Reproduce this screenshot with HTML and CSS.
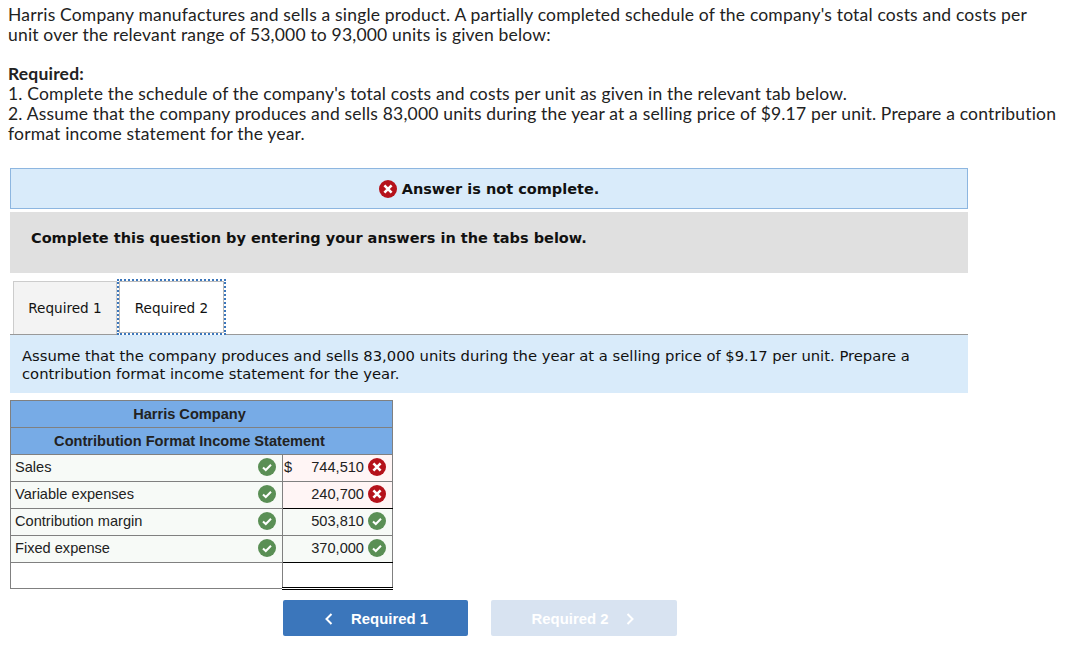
FILE: index.html
```html
<!DOCTYPE html>
<html lang="en">
<head>
    <meta charset="UTF-8">
    <title>Harris Company</title>
    <link rel="stylesheet" href="styles.css">
</head>
<body>

    <svg class="defs" width="0" height="0">
        <symbol id="icon-x" viewBox="0 0 18 18">
            <circle cx="9" cy="9" r="9" fill="#b5121b"/>
            <path d="M5.4 5.4l7.2 7.2M12.6 5.4l-7.2 7.2" stroke="#fff" stroke-width="2.6" fill="none"/>
        </symbol>
        <symbol id="icon-check" viewBox="0 0 18 18">
            <circle cx="9" cy="9" r="9" fill="#5a8f55"/>
            <path d="M5 9.4l2.8 2.6 5.2-5.2" stroke="#fff" stroke-width="2" fill="none"/>
        </symbol>
    </svg>

    <div class="pregunta">
        <p>Harris Company manufactures and sells a single product. A partially completed schedule of the company's total costs and costs per unit over the relevant range of 53,000 to 93,000 units is given below:</p>
        <p class="requerido"><strong>Required:</strong><br>
        1. Complete the schedule of the company's total costs and costs per unit as given in the relevant tab below.<br>
        2. Assume that the company produces and sells 83,000 units during the year at a selling price of $9.17 per unit. Prepare a contribution format income statement for the year.</p>
    </div>

    <div class="contenido">
        <div class="aviso">
            <svg class="icono-aviso"><use href="#icon-x"/></svg>
            <strong>Answer is not complete.</strong>
        </div>
        <div class="instruccion">Complete this question by entering your answers in the tabs below.</div>

        <div class="tabs">
            <div class="tab">Required 1</div>
            <div class="tab activo">Required 2</div>
        </div>
        <div class="enunciado">Assume that the company produces and sells 83,000 units during the year at a selling price of $9.17 per unit. Prepare a contribution format income statement for the year.</div>

        <table class="estado">
            <colgroup>
                <col class="col-concepto">
                <col>
            </colgroup>
            <tr><th colspan="2">Harris Company</th></tr>
            <tr><th colspan="2">Contribution Format Income Statement</th></tr>
            <tr>
                <td><div class="celda">Sales <svg class="icono"><use href="#icon-check"/></svg></div></td>
                <td class="mal"><div class="celda valor"><span>$</span><span class="monto">744,510</span> <svg class="icono"><use href="#icon-x"/></svg></div></td>
            </tr>
            <tr>
                <td><div class="celda">Variable expenses <svg class="icono"><use href="#icon-check"/></svg></div></td>
                <td class="mal linea"><div class="celda valor"><span class="monto">240,700</span> <svg class="icono"><use href="#icon-x"/></svg></div></td>
            </tr>
            <tr>
                <td><div class="celda">Contribution margin <svg class="icono"><use href="#icon-check"/></svg></div></td>
                <td><div class="celda valor"><span class="monto">503,810</span> <svg class="icono"><use href="#icon-check"/></svg></div></td>
            </tr>
            <tr>
                <td><div class="celda">Fixed expense <svg class="icono"><use href="#icon-check"/></svg></div></td>
                <td class="linea"><div class="celda valor"><span class="monto">370,000</span> <svg class="icono"><use href="#icon-check"/></svg></div></td>
            </tr>
            <tr class="vacia">
                <td></td>
                <td class="doble"></td>
            </tr>
        </table>

        <div class="navegacion">
            <div class="boton">
                <svg class="flecha" viewBox="0 0 8 12"><path d="M6.5 1L1.5 6l5 5"/></svg>
                Required 1
            </div>
            <div class="boton inactivo">
                Required 2
                <svg class="flecha" viewBox="0 0 8 12"><path d="M1.5 1l5 5-5 5"/></svg>
            </div>
        </div>
    </div>

</body>
</html>
```

FILE: styles.css
```css
body {
    margin: 0;
    padding: 5px 8px 0;
    background-color: #fff;
    color: #222;
    font-family: Lato, "Open Sans", sans-serif;
    font-size: 17.5px;
    letter-spacing: 0.18px;
    line-height: 20px;
}

.defs {
    position: absolute;
}

.pregunta {
    width: 1051px;
}

.pregunta p {
    margin: 0;
}

.pregunta .requerido {
    margin-top: 19px;
}

.contenido {
    width: 958px;
    margin: 24px 0 0 2px;
    font-family: "DejaVu Sans", sans-serif;
    letter-spacing: 0;
    color: #111;
}

.aviso {
    height: 39px;
    display: flex;
    justify-content: center;
    align-items: center;
    gap: 5px;
    background-color: #d9ebfa;
    border: 1px solid #8db6e0;
    font-size: 14.5px;
}

.icono-aviso {
    width: 18px;
    height: 18px;
}

.instruccion {
    height: 61px;
    margin-top: 3px;
    padding: 16px 21px 0;
    box-sizing: border-box;
    background-color: #e0e0e0;
    font-size: 14.5px;
    font-weight: bold;
}

.tabs {
    display: flex;
    margin-top: 6px;
    padding-left: 3px;
    height: 55px;
    border-bottom: 1px solid #999;
}

.tab {
    width: 104px;
    margin-top: 2px;
    box-sizing: border-box;
    border: 1px solid #ccc;
    border-bottom: none;
    background-color: #f3f3f3;
    font-size: 13.6px;
    text-align: center;
    line-height: 52px;
}

.tab.activo {
    width: 109px;
    margin-top: 0;
    height: 56px;
    background-color: #fff;
    border: 2px dotted #3b76bb;
    outline: 1px solid #bbb;
    outline-offset: -3px;
    line-height: 55px;
}

.enunciado {
    padding: 12px 12px 10px;
    background-color: #d9ebfa;
    font-size: 14.75px;
    line-height: 18px;
}

.estado {
    width: 383px;
    margin-top: 7px;
    border-collapse: collapse;
    table-layout: fixed;
    font-family: "Liberation Sans", Arial, sans-serif;
    font-size: 14.6px;
    color: #222;
}

.col-concepto {
    width: 272px;
}

.estado th {
    height: 26px;
    padding: 0 24px 0 0;
    background-color: #77abe6;
    border: 1px solid #808080;
}

.estado td {
    height: 26px;
    padding: 0;
    background-color: #f7faf7;
    border: 1px solid #808080;
}

.celda {
    display: flex;
    justify-content: space-between;
    align-items: center;
    padding: 0 6px 2px 4px;
}

.celda.valor {
    padding: 0 6px 2px 1px;
}

.monto {
    margin-left: auto;
    margin-right: 4px;
}

.icono {
    width: 18px;
    height: 18px;
    flex: none;
}

.estado td.mal {
    background-color: #fff5f5;
}

.estado td.linea {
    border-bottom: 1px solid #000;
}

.estado .vacia td {
    height: 24px;
    background-color: #fff;
}

.estado td.doble {
    border-bottom: 3px double #000;
}

.navegacion {
    display: flex;
    gap: 23px;
    margin: 10px 0 0 273px;
}

.boton {
    width: 185px;
    height: 36px;
    box-sizing: border-box;
    padding: 2px 0 0 2px;
    display: flex;
    justify-content: center;
    align-items: center;
    gap: 18px;
    background-color: #3b76bb;
    border-radius: 2px;
    color: #fff;
    font-family: "Liberation Sans", Arial, sans-serif;
    font-size: 14.9px;
    font-weight: bold;
}

.boton.inactivo {
    width: 186px;
    padding: 2px 2px 0 0;
    background-color: #d8e3f1;
}

.flecha {
    width: 8px;
    height: 12px;
    fill: none;
    stroke: #fff;
    stroke-width: 2;
}
```
